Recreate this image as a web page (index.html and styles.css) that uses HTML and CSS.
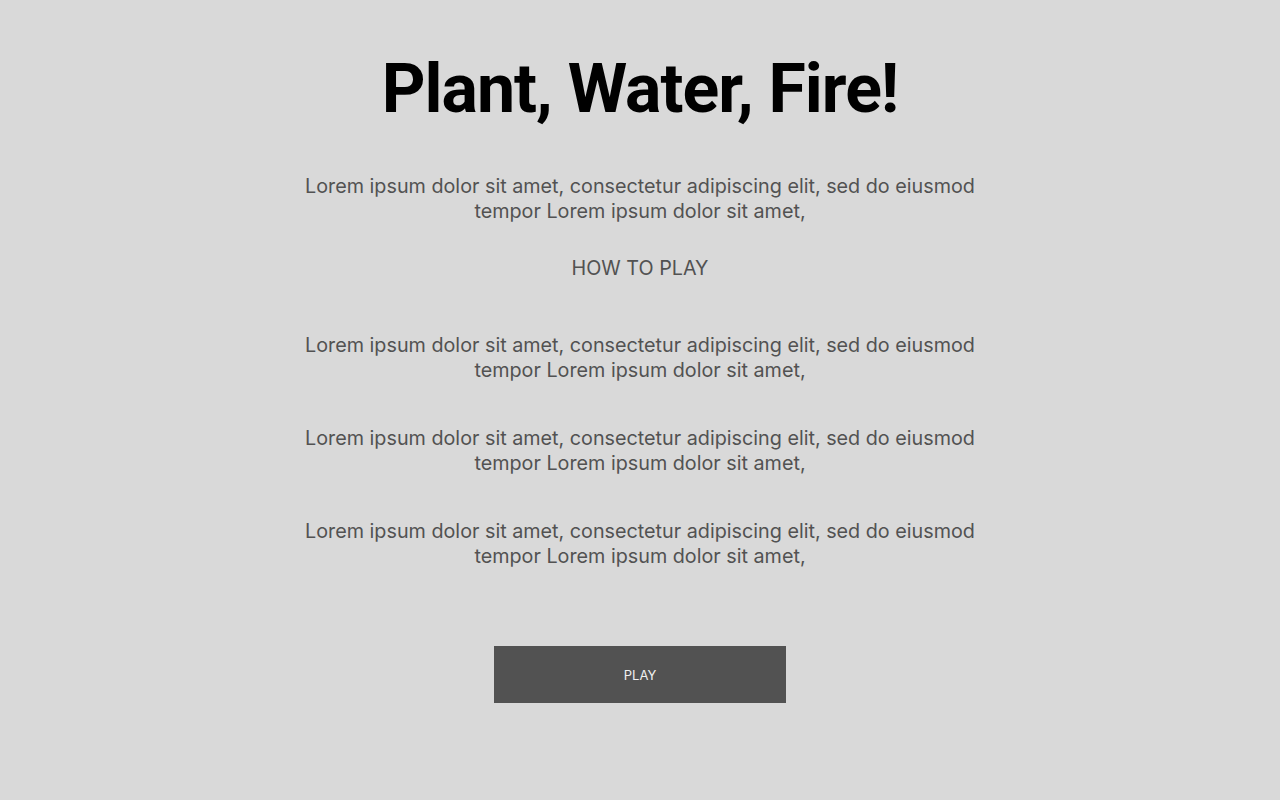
FILE: index.html
```html
<!DOCTYPE html>
<html lang="en">
<head>
<meta charset="utf-8">
<title>Plant, Water, Fire!</title>
<link rel="stylesheet" href="styles.css">
</head>
<body>
<main class="page">
  <h1 class="title">Plant, Water, Fire!</h1>
  <p class="intro">Lorem ipsum dolor sit amet, consectetur adipiscing elit, sed do eiusmod<br>tempor Lorem ipsum dolor sit amet,</p>
  <h2 class="howto">HOW TO PLAY</h2>
  <div class="steps">
    <p class="step">Lorem ipsum dolor sit amet, consectetur adipiscing elit, sed do eiusmod<br>tempor Lorem ipsum dolor sit amet,</p>
    <p class="step">Lorem ipsum dolor sit amet, consectetur adipiscing elit, sed do eiusmod<br>tempor Lorem ipsum dolor sit amet,</p>
    <p class="step">Lorem ipsum dolor sit amet, consectetur adipiscing elit, sed do eiusmod<br>tempor Lorem ipsum dolor sit amet,</p>
  </div>
  <button class="play" type="button">PLAY</button>
</main>
</body>
</html>
```

FILE: styles.css
```css
html, body {
  margin: 0;
  padding: 0;
  background: #d9d9d9;
}

body {
  font-family: Inter, "Open Sans", sans-serif;
  color: #525252;
  min-height: 800px;
}

.page {
  display: flex;
  flex-direction: column;
  align-items: center;
  text-align: center;
  padding-top: 46px;
}

.title {
  margin: 0;
  font-family: Roboto, Inter, sans-serif;
  font-weight: 700;
  font-size: 68px;
  line-height: 86px;
  color: #000;
  letter-spacing: -1px;
}

.intro,
.step {
  margin: 0;
  font-size: 19.75px;
  line-height: 24.5px;
  color: #525252;
}

.intro {
  margin-top: 42px;
}

.howto {
  margin: 33px 0 0;
  font-weight: 400;
  font-size: 19.75px;
  line-height: 25px;
  color: #525252;
}

.steps {
  display: flex;
  flex-direction: column;
  gap: 44px;
  margin-top: 52px;
}

.play {
  margin-top: 78px;
  width: 292px;
  height: 57px;
  border: none;
  background: #525252;
  color: #f0f0f0;
  font-family: Inter, sans-serif;
  font-size: 13px;
  cursor: pointer;
}
```
